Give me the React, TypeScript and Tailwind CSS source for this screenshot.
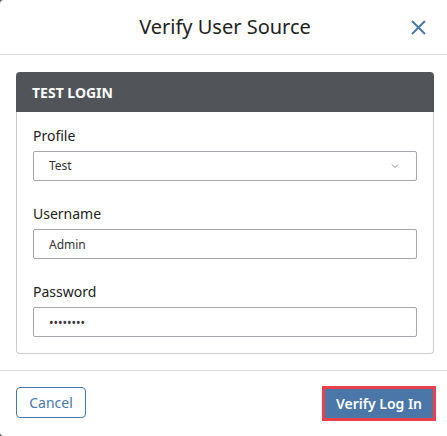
import { ChangeEvent } from 'react'

export default function App() {
  return (
    <div className="w-[447px] h-[436px] overflow-hidden bg-[#5b5b5b] font-['Noto_Sans',sans-serif]">
      <div className="w-[450px] h-[436px] bg-white rounded-[4px] flex flex-col">
        <div className="relative h-[55px] border-b border-[#dcdcdc] flex items-center justify-center">
          <h2 className="text-[20px] leading-7 text-[#222]">Verify User Source</h2>
          <button className="absolute right-[24px] top-[19px] w-[16px] h-[16px] flex items-center justify-center">
            <svg width="15" height="15" viewBox="0 0 15 15" fill="none">
              <path d="M1 1L14 14M14 1L1 14" stroke="#4a76a8" strokeWidth="2" />
            </svg>
          </button>
        </div>

        <div className="px-4 pt-[17px] pb-4">
          <div className="h-10 rounded-t-[4px] bg-[#515459] px-4 flex items-center text-white text-[14px] font-bold">
            TEST LOGIN
          </div>
          <div className="border border-t-0 border-[#cccccc] rounded-b-[4px] px-4 pt-[14px] pb-4">
            <Field label="Profile">
              <div className="h-[30px] border border-[#a3a7ab] rounded-[2px] pl-[15px] pr-[17px] flex items-center justify-between text-[12px] text-[#333]">
                <span>Test</span>
                <svg width="8" height="6" viewBox="0 0 8 6" fill="none">
                  <path d="M1 1.5L4 4.5L7 1.5" stroke="#8a8d91" strokeWidth="1" />
                </svg>
              </div>
            </Field>
            <Field label="Username" className="mt-[23px]">
              <TextBox value="Admin" />
            </Field>
            <Field label="Password" className="mt-[23px]">
              <TextBox value="abcdefgh" type="password" />
            </Field>
          </div>
        </div>

        <div className="border-t border-[#dcdcdc] px-4 pt-4 flex justify-between items-start">
          <button className="w-[70px] h-[31px] border border-[#4a76a8] rounded-[4px] text-[14px] text-[#4a76a8]">
            Cancel
          </button>
          <button className="mt-[1px] w-[110px] h-[31px] bg-[#4a76a8] border border-[#e8414b] outline-2 outline-solid outline-[#e8414b] text-[14px] font-semibold text-white">
            Verify Log In
          </button>
        </div>
      </div>
    </div>
  )
}

function Field({ label, className, children }: { label: string, className?: string, children: React.ReactNode }) {
  return (
    <div className={className}>
      <div className="text-[14px] leading-5 text-[#222] mb-[5px]">{label}</div>
      {children}
    </div>
  )
}

function TextBox({ value, type = 'text' }: { value: string, type?: string }) {
  return (
    <input
      type={type}
      value={value}
      onChange={(e: ChangeEvent<HTMLInputElement>) => e.preventDefault()}
      className="block w-full h-[30px] border border-[#a3a7ab] rounded-[2px] px-[15px] text-[12px] text-[#333] outline-none font-['Noto_Sans',sans-serif]"
    />
  )
}
